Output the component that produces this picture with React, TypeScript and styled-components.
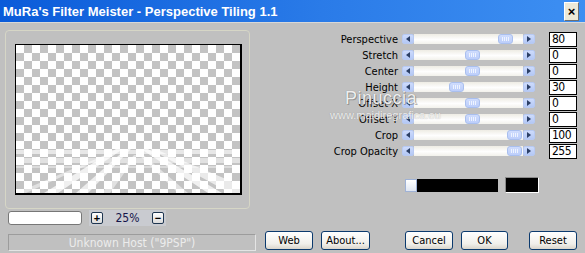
import styled, { createGlobalStyle } from 'styled-components';

const GlobalStyle = createGlobalStyle`
  html, body { margin: 0; padding: 0; }
  body {
    width: 585px;
    height: 253px;
    overflow: hidden;
    background: #c0c0c0;
    font-family: "DejaVu Sans Condensed", "Liberation Sans", sans-serif;
  }
`;

const narrow = `"DejaVu Sans Condensed", "Liberation Sans", sans-serif`;

const Window = styled.div`
  position: relative;
  width: 585px;
  height: 253px;
  background: #c0c0c0;
  display: flex;
  flex-direction: column;
  overflow: hidden;
`;

const TitleBar = styled.div`
  height: 22px;
  flex: none;
  display: flex;
  align-items: center;
  justify-content: space-between;
  padding: 0 6px 0 3px;
  background: linear-gradient(to right, #0a5bd9, #2a7be8 55%, #3d8ff2);
  border-bottom: 1px solid #d8d8d8;
`;

const Title = styled.span`
  color: #fff;
  font-family: "Liberation Sans", Arial, sans-serif;
  font-weight: bold;
  font-size: 13px;
`;

const CloseButton = styled.div`
  width: 13px;
  height: 17px;
  background: #ece9d8;
  border: 1px solid;
  border-color: #fff #6f6f6f #6f6f6f #fff;
  display: flex;
  align-items: center;
  justify-content: center;
  font: bold 13px "Liberation Sans", Arial, sans-serif;
  color: #000;
`;

const Body = styled.div`
  flex: 1;
  display: flex;
  padding-top: 7px;
`;

const LeftColumn = styled.div`
  width: 251px;
  margin-left: 5px;
  display: flex;
  flex-direction: column;
`;

const GroupBox = styled.div`
  width: 245px;
  height: 179px;
  box-sizing: border-box;
  border: 1px solid #d6d6c6;
  border-radius: 4px;
  padding: 13px 0 0 9px;
`;

const Preview = styled.div`
  width: 227px;
  height: 151px;
  box-sizing: border-box;
  border: solid #000;
  border-width: 1px 2px 2px 1px;
  background-color: #fff;
  background-image: conic-gradient(#c3c3c3 25%, transparent 0 50%, #c3c3c3 0 75%, transparent 0);
  background-size: 16px 16px;
  overflow: hidden;
`;

const Streaks = styled.svg`
  display: block;
  width: 224px;
  height: 148px;
`;

const ZoomRow = styled.div`
  display: flex;
  align-items: center;
  margin: 2px 0 0 3px;
  height: 14px;
`;

const ZoomInput = styled.div`
  width: 74px;
  height: 14px;
  box-sizing: border-box;
  background: #fff;
  border: 1px solid #777;
  border-radius: 3px;
`;

const ZoomPanel = styled.div`
  display: flex;
  align-items: center;
  margin-left: 7px;
  padding: 0 2px;
  height: 16px;
  background: #c9cbd0;
`;

const ZoomButton = styled.div`
  width: 12px;
  height: 12px;
  box-sizing: border-box;
  border: 1px solid #1f3650;
  border-radius: 2px;
  background: linear-gradient(#ffffff, #dcdcdc);
  display: flex;
  align-items: center;
  justify-content: center;
  font: bold 11px "Liberation Sans", Arial, sans-serif;
  line-height: 1;
  color: #000;
`;

const ZoomValue = styled.span`
  width: 49px;
  text-align: center;
  font-family: ${narrow};
  font-size: 12px;
  color: #14144a;
`;

const StatusBar = styled.div`
  margin: 9px 0 0 3px;
  width: 248px;
  height: 17px;
  box-sizing: border-box;
  border: 1px solid;
  border-color: #9c9c9c #e4e4e4 #e4e4e4 #9c9c9c;
  display: flex;
  align-items: center;
  justify-content: center;
  font-family: ${narrow};
  font-size: 12px;
  color: #ececec;
`;

const RightColumn = styled.div`
  width: 315px;
  margin-left: 9px;
  display: flex;
  flex-direction: column;
  padding: 1px 0 3px;
  box-sizing: border-box;
`;

const SliderRow = styled.div`
  height: 16px;
  display: flex;
  align-items: center;
`;

const Label = styled.span`
  width: 133px;
  text-align: right;
  font-family: ${narrow};
  font-size: 11px;
  color: #000;
  white-space: nowrap;
`;

const Scroll = styled.div`
  width: 133px;
  height: 10px;
  margin-left: 4px;
  display: flex;
`;

const ArrowButton = styled.div`
  width: 12px;
  height: 10px;
  box-sizing: border-box;
  border: 1px solid #b7c9f2;
  border-radius: 2px;
  background: linear-gradient(#cddbfc, #b4c8f5);
  display: flex;
  align-items: center;
  justify-content: center;
`;

const Trough = styled.div`
  flex: 1;
  display: flex;
  align-items: stretch;
  background: linear-gradient(#eeece4, #fefefe 55%, #f2f1eb);
`;

const Thumb = styled.div`
  width: 15px;
  box-sizing: border-box;
  border: 1px solid #a9bfee;
  border-radius: 3px;
  background: linear-gradient(#cfdcfd, #bccefb);
  display: flex;
  align-items: center;
  justify-content: center;
  gap: 1px;
`;

const Grip = styled.span`
  width: 1px;
  height: 4px;
  background: #eef3ff;
`;

const ValueBox = styled.div`
  width: 28px;
  height: 15px;
  margin-left: 14px;
  box-sizing: border-box;
  border: 1px solid #000;
  background: #fff;
  padding-left: 2px;
  font-family: ${narrow};
  font-size: 12px;
  line-height: 13px;
  letter-spacing: -0.5px;
  color: #000;
`;

const ColorRow = styled.div`
  display: flex;
  align-items: center;
  margin: 18px 0 0 140px;
  gap: 7px;
`;

const ColorBar = styled.div`
  width: 93px;
  height: 13px;
  background: #000;
  display: flex;
`;

const ColorKnob = styled.div`
  width: 12px;
  height: 13px;
  box-sizing: border-box;
  border: 1px solid #9fb2d6;
  background: linear-gradient(#ffffff, #dfe6f2);
`;

const Swatch = styled.div`
  width: 34px;
  height: 16px;
  box-sizing: border-box;
  background: #000;
  border: 1px solid;
  border-color: #8a8a8a #fff #fff #8a8a8a;
`;

const ButtonRow = styled.div`
  margin-top: auto;
  display: flex;
  align-items: center;
`;

const Button = styled.div<{ $w: number; $gap: number }>`
  width: ${(p) => p.$w}px;
  height: 19px;
  margin-left: ${(p) => p.$gap}px;
  box-sizing: border-box;
  border: 1px solid #0b3a6e;
  border-radius: 3px;
  background: linear-gradient(#ffffff, #f0efea 70%, #d9d5cb);
  display: flex;
  align-items: center;
  justify-content: center;
  font-family: ${narrow};
  font-size: 11px;
  color: #000;
`;

const Watermark = styled.div`
  position: absolute;
  left: 330px;
  top: 88px;
  display: flex;
  flex-direction: column;
  align-items: flex-start;
  pointer-events: none;
`;

const WatermarkName = styled.span`
  margin-left: 15px;
  font: 18px "Liberation Sans", Arial, sans-serif;
  color: rgba(250, 250, 250, 0.92);
  letter-spacing: 0.5px;
  text-shadow: 0 0 1px #7a7a7a, 1px 1px 0 rgba(110, 110, 110, 0.5);
`;

const WatermarkUrl = styled.span`
  font: 11px "Liberation Sans", Arial, sans-serif;
  color: rgba(245, 245, 245, 0.9);
  text-shadow: 0 0 1px rgba(110, 110, 110, 0.5);
`;

const sliders = [
  { label: 'Perspective', value: '80', pos: 0.89 },
  { label: 'Stretch', value: '0', pos: 0.54 },
  { label: 'Center', value: '0', pos: 0.54 },
  { label: 'Height', value: '30', pos: 0.37 },
  { label: 'Offset X', value: '0', pos: 0.54 },
  { label: 'Offset Y', value: '0', pos: 0.54 },
  { label: 'Crop', value: '100', pos: 0.99 },
  { label: 'Crop Opacity', value: '255', pos: 0.99 },
];

const LeftArrow = () => (
  <svg width="4" height="6" viewBox="0 0 4 6">
    <path d="M4 0 L0 3 L4 6 Z" fill="#2b3f66" />
  </svg>
);

const RightArrow = () => (
  <svg width="4" height="6" viewBox="0 0 4 6">
    <path d="M0 0 L4 3 L0 6 Z" fill="#2b3f66" />
  </svg>
);

const Slider = ({ pos }: { pos: number }) => (
  <Scroll>
    <ArrowButton>
      <LeftArrow />
    </ArrowButton>
    <Trough>
      <Thumb style={{ marginLeft: `${Math.round(pos * 94)}px` }}>
        <Grip />
        <Grip />
        <Grip />
        <Grip />
      </Thumb>
    </Trough>
    <ArrowButton>
      <RightArrow />
    </ArrowButton>
  </Scroll>
);

export default function App() {
  return (
    <>
      <GlobalStyle />
      <Window>
        <TitleBar>
          <Title>MuRa's Filter Meister - Perspective Tiling 1.1</Title>
          <CloseButton>×</CloseButton>
        </TitleBar>
        <Body>
          <LeftColumn>
            <GroupBox>
              <Preview>
                <Streaks viewBox="0 0 224 148">
                  <g fill="#fff">
                    <rect x="0" y="105" width="224" height="4" opacity="0.6" />
                    <rect x="0" y="113" width="224" height="5" opacity="0.5" />
                    <rect x="0" y="121" width="224" height="2" opacity="0.4" />
                    <polygon points="100,104 107,104 42,148 28,148" opacity="0.75" />
                    <polygon points="110,104 115,104 72,148 60,148" opacity="0.7" />
                    <polygon points="94,108 98,108 10,148 0,148" opacity="0.5" />
                    <polygon points="118,110 121,110 94,148 86,148" opacity="0.5" />
                    <polygon points="125,104 132,104 206,148 192,148" opacity="0.75" />
                    <polygon points="134,104 139,104 224,140 224,148 214,148" opacity="0.65" />
                    <polygon points="121,108 125,108 172,148 162,148" opacity="0.5" />
                  </g>
                </Streaks>
              </Preview>
            </GroupBox>
            <ZoomRow>
              <ZoomInput />
              <ZoomPanel>
                <ZoomButton>+</ZoomButton>
                <ZoomValue>25%</ZoomValue>
                <ZoomButton>−</ZoomButton>
              </ZoomPanel>
            </ZoomRow>
            <StatusBar>Unknown Host ("9PSP")</StatusBar>
          </LeftColumn>
          <RightColumn>
            {sliders.map((s) => (
              <SliderRow key={s.label}>
                <Label>{s.label}</Label>
                <Slider pos={s.pos} />
                <ValueBox>{s.value}</ValueBox>
              </SliderRow>
            ))}
            <ColorRow>
              <ColorBar>
                <ColorKnob />
              </ColorBar>
              <Swatch />
            </ColorRow>
            <ButtonRow>
              <Button $w={48} $gap={0}>Web</Button>
              <Button $w={49} $gap={8}>About...</Button>
              <Button $w={48} $gap={35}>Cancel</Button>
              <Button $w={47} $gap={8}>OK</Button>
              <Button $w={48} $gap={21}>Reset</Button>
            </ButtonRow>
          </RightColumn>
        </Body>
        <Watermark>
          <WatermarkName>Pinuccia</WatermarkName>
          <WatermarkUrl>www.maidiregrafica.eu</WatermarkUrl>
        </Watermark>
      </Window>
    </>
  );
}
